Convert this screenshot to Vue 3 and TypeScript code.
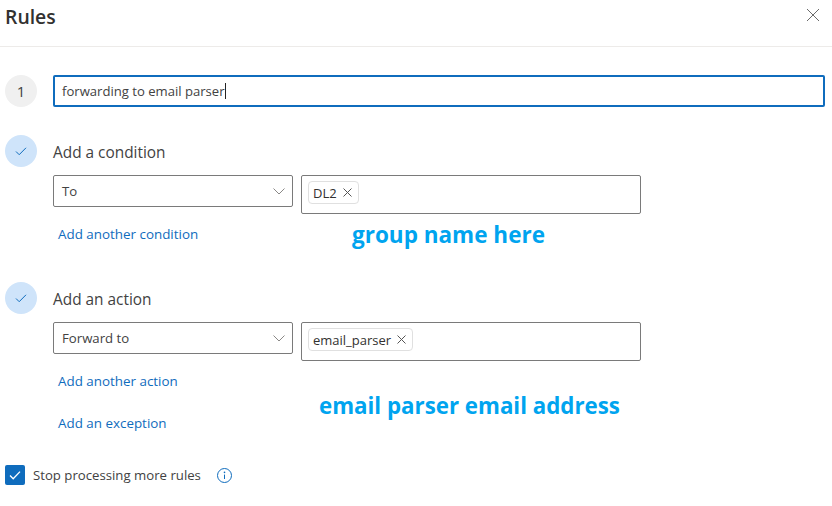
<script setup lang="ts">
const brand = '#0f6cbd';
</script>

<template>
  <div class="dialog">
    <header class="head">
      <h1>Rules</h1>
      <svg class="close" width="12" height="12" viewBox="0 0 12 12">
        <path d="M0 0l12 12M12 0L0 12" stroke="#6b6b6b" stroke-width="1" fill="none" />
      </svg>
    </header>

    <div class="step name-step">
      <span class="circle num">1</span>
      <div class="name-input">forwarding to email parser<i class="caret"></i></div>
    </div>

    <section class="block first">
      <div class="step">
        <span class="circle done">
          <svg width="12" height="12" viewBox="0 0 12 12">
            <path d="M1 6.5l3.2 3.2L11 2.8" :stroke="brand" stroke-width="1" fill="none" />
          </svg>
        </span>
        <span class="title">Add a condition</span>
      </div>
      <div class="fields">
        <div class="select">
          <span>To</span>
          <svg width="12" height="7" viewBox="0 0 12 7">
            <path d="M.5 .5L6 6l5.5-5.5" stroke="#8a8886" stroke-width="1" fill="none" />
          </svg>
        </div>
        <div class="tagbox">
          <span class="tag">DL2
            <svg width="9" height="9" viewBox="0 0 9 9">
              <path d="M.5 .5l8 8M8.5 .5l-8 8" stroke="#555" stroke-width="1" fill="none" />
            </svg>
          </span>
        </div>
        <div class="links">
          <a>Add another condition</a>
        </div>
        <div class="note note-group">group name here</div>
      </div>
    </section>

    <section class="block second">
      <div class="step">
        <span class="circle done">
          <svg width="12" height="12" viewBox="0 0 12 12">
            <path d="M1 6.5l3.2 3.2L11 2.8" :stroke="brand" stroke-width="1" fill="none" />
          </svg>
        </span>
        <span class="title">Add an action</span>
      </div>
      <div class="fields">
        <div class="select">
          <span>Forward to</span>
          <svg width="12" height="7" viewBox="0 0 12 7">
            <path d="M.5 .5L6 6l5.5-5.5" stroke="#8a8886" stroke-width="1" fill="none" />
          </svg>
        </div>
        <div class="tagbox">
          <span class="tag">email_parser
            <svg width="9" height="9" viewBox="0 0 9 9">
              <path d="M.5 .5l8 8M8.5 .5l-8 8" stroke="#555" stroke-width="1" fill="none" />
            </svg>
          </span>
        </div>
        <div class="links">
          <a>Add another action</a>
          <a class="later">Add an exception</a>
        </div>
        <div class="note note-email">email parser email address</div>
      </div>
    </section>

    <label class="stop">
      <span class="check">
        <svg width="14" height="14" viewBox="0 0 14 14">
          <path d="M2 7.5l3.2 3.2L12 3.6" stroke="#fff" stroke-width="1.3" fill="none" />
        </svg>
      </span>
      <span class="stop-text">Stop processing more rules</span>
      <svg class="info" width="15" height="15" viewBox="0 0 15 15">
        <circle cx="7.5" cy="7.5" r="7" :stroke="brand" stroke-width="1" fill="none" />
        <path d="M7.5 6.6v4.4" :stroke="brand" stroke-width="1" fill="none" />
        <circle cx="7.5" cy="4.4" r=".8" :fill="brand" />
      </svg>
    </label>
  </div>
</template>

<style>
html,
body {
  margin: 0;
  background: #fff;
}
</style>

<style scoped>
.dialog {
  width: 832px;
  height: 506px;
  overflow: hidden;
  font-family: "Open Sans", "Noto Sans", sans-serif;
  font-size: 13.2px;
  color: #424242;
}

.head {
  height: 46px;
  box-sizing: content-box;
  border-bottom: 1px solid #edebe9;
  display: flex;
  align-items: flex-start;
  justify-content: space-between;
  padding: 0 13px 0 5px;
}

h1 {
  margin: 5px 0 0;
  font-size: 19.4px;
  line-height: 24px;
  font-weight: 600;
  color: #323130;
}

.close {
  margin-top: 9px;
}

.step {
  display: flex;
  align-items: center;
  gap: 16px;
  padding-left: 5px;
}

.name-step {
  margin-top: 28px;
  padding-right: 7px;
}

.circle {
  flex: none;
  width: 32px;
  height: 32px;
  border-radius: 50%;
  display: flex;
  align-items: center;
  justify-content: center;
}

.num {
  background: #f0f0f0;
  font-size: 15px;
  color: #424242;
}

.done {
  background: #cfe4fa;
}

.name-input {
  flex: 1;
  height: 32px;
  box-sizing: border-box;
  border: 2px solid #0f6cbd;
  border-radius: 2px;
  padding: 0 7px;
  line-height: 28px;
  font-size: 13.1px;
  white-space: nowrap;
}

.caret {
  display: inline-block;
  width: 1px;
  height: 16px;
  background: #242424;
  vertical-align: -3px;
}

.block.first {
  margin-top: 28px;
}

.block.second {
  margin-top: 32px;
}

.title {
  font-size: 15.4px;
  line-height: 22px;
  padding-top: 4px;
  color: #424242;
}

.fields {
  display: grid;
  grid-template-columns: 240px 340px;
  column-gap: 8px;
  margin: 8px 0 0 53px;
  align-items: start;
}

.select {
  height: 32px;
  box-sizing: border-box;
  border: 1px solid #7a7a7a;
  border-radius: 2px;
  padding: 0 7px 0 8px;
  display: flex;
  align-items: center;
  justify-content: space-between;
}

.tagbox {
  height: 39px;
  box-sizing: border-box;
  border: 1px solid #7a7a7a;
  border-radius: 2px;
  padding: 5px 6px;
  display: flex;
  align-items: flex-start;
}

.tag {
  display: flex;
  align-items: center;
  gap: 6px;
  height: 23px;
  box-sizing: border-box;
  padding: 0 6px 0 4px;
  border: 1px solid #e0e0e0;
  border-radius: 4px;
  font-size: 13px;
  color: #323130;
}

.links {
  display: flex;
  flex-direction: column;
  align-items: flex-start;
  padding: 10px 0 0 5px;
}

.links a {
  line-height: 20px;
  font-size: 13.4px;
  color: #0f6cbd;
}

.links a.later {
  margin-top: 22px;
}

.note {
  font-weight: 700;
  line-height: 30px;
  color: #00a4ef;
  white-space: nowrap;
}

.note-group {
  font-size: 22.5px;
  margin: 6px 0 0 51px;
}

.note-email {
  font-size: 22.3px;
  margin: 30px 0 0 18px;
}

.stop {
  display: flex;
  align-items: center;
  margin: 32px 0 0 5px;
}

.check {
  width: 20px;
  height: 20px;
  background: #0f6cbd;
  border-radius: 2px;
  display: flex;
  align-items: center;
  justify-content: center;
}

.stop-text {
  margin-left: 8px;
}

.info {
  margin-left: 16px;
}
</style>
